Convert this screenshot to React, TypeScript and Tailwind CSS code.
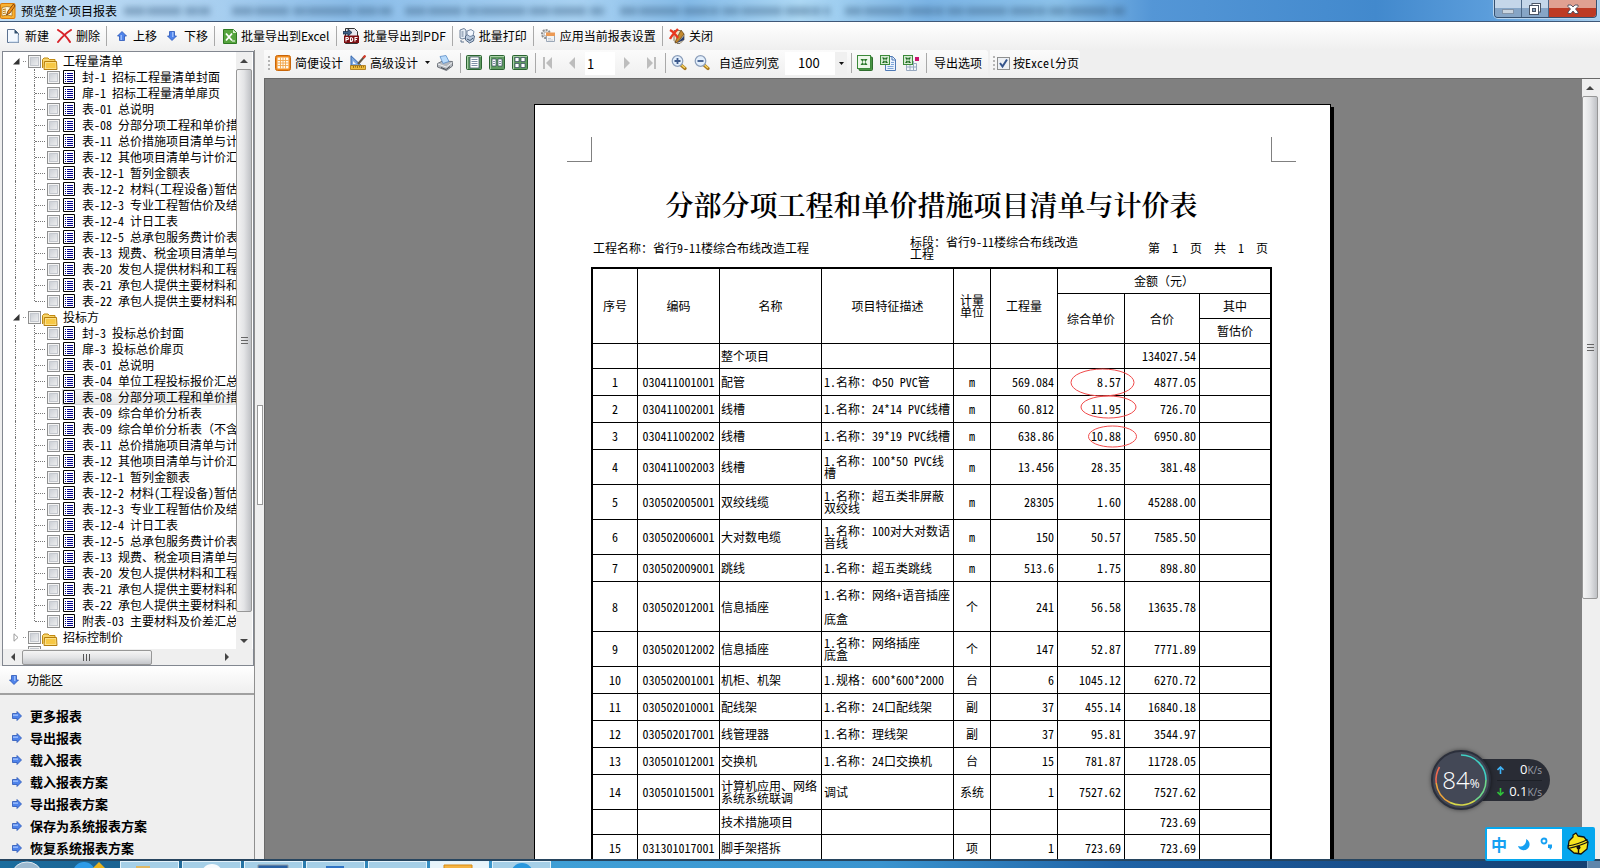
import type { ReactNode } from "react";
import clsx from "clsx";

const REPORTS_TENDER = [
  "封-1 招标工程量清单封面",
  "扉-1 招标工程量清单扉页",
  "表-01 总说明",
  "表-08 分部分项工程和单价措",
  "表-11 总价措施项目清单与计",
  "表-12 其他项目清单与计价汇",
  "表-12-1 暂列金额表",
  "表-12-2 材料(工程设备)暂估",
  "表-12-3 专业工程暂估价及结",
  "表-12-4 计日工表",
  "表-12-5 总承包服务费计价表",
  "表-13 规费、税金项目清单与",
  "表-20 发包人提供材料和工程",
  "表-21 承包人提供主要材料和",
  "表-22 承包人提供主要材料和",
];

const REPORTS_BID = [
  "封-3 投标总价封面",
  "扉-3 投标总价扉页",
  "表-01 总说明",
  "表-04 单位工程投标报价汇总",
  "表-08 分部分项工程和单价措",
  "表-09 综合单价分析表",
  "表-09 综合单价分析表（不含",
  "表-11 总价措施项目清单与计",
  "表-12 其他项目清单与计价汇",
  "表-12-1 暂列金额表",
  "表-12-2 材料(工程设备)暂估",
  "表-12-3 专业工程暂估价及结",
  "表-12-4 计日工表",
  "表-12-5 总承包服务费计价表",
  "表-13 规费、税金项目清单与",
  "表-20 发包人提供材料和工程",
  "表-21 承包人提供主要材料和",
  "表-22 承包人提供主要材料和",
  "附表-03 主要材料及价差汇总",
];

const ACTIONS = [
  "更多报表",
  "导出报表",
  "载入报表",
  "载入报表方案",
  "导出报表方案",
  "保存为系统报表方案",
  "恢复系统报表方案",
];

interface Row {
  no?: string;
  code?: string;
  name: string;
  feature?: string;
  unit?: string;
  qty?: string;
  price?: string;
  total: string;
  height: string;
}

const ROWS: Row[] = [
  { name: "整个项目", total: "134027.54", height: "h-[25px]" },
  { no: "1", code: "030411001001", name: "配管", feature: "1.名称：Φ50 PVC管", unit: "m", qty: "569.084", price: "8.57", total: "4877.05", height: "h-[27px]" },
  { no: "2", code: "030411002001", name: "线槽", feature: "1.名称：24*14 PVC线槽", unit: "m", qty: "60.812", price: "11.95", total: "726.70", height: "h-[27px]" },
  { no: "3", code: "030411002002", name: "线槽", feature: "1.名称：39*19 PVC线槽", unit: "m", qty: "638.86", price: "10.88", total: "6950.80", height: "h-[27px]" },
  { no: "4", code: "030411002003", name: "线槽", feature: "1.名称：100*50 PVC线\n槽", unit: "m", qty: "13.456", price: "28.35", total: "381.48", height: "h-[35px]" },
  { no: "5", code: "030502005001", name: "双绞线缆", feature: "1.名称：超五类非屏蔽\n双绞线", unit: "m", qty: "28305", price: "1.60", total: "45288.00", height: "h-[35px]" },
  { no: "6", code: "030502006001", name: "大对数电缆", feature: "1.名称：100对大对数语\n音线", unit: "m", qty: "150", price: "50.57", total: "7585.50", height: "h-[35px]" },
  { no: "7", code: "030502009001", name: "跳线", feature: "1.名称：超五类跳线", unit: "m", qty: "513.6", price: "1.75", total: "898.80", height: "h-[27px]" },
  { no: "8", code: "030502012001", name: "信息插座", feature: "1.名称：网络+语音插座\n\n底盒", unit: "个", qty: "241", price: "56.58", total: "13635.78", height: "h-[50px]" },
  { no: "9", code: "030502012002", name: "信息插座", feature: "1.名称：网络插座\n底盒", unit: "个", qty: "147", price: "52.87", total: "7771.89", height: "h-[35px]" },
  { no: "10", code: "030502001001", name: "机柜、机架", feature: "1.规格：600*600*2000", unit: "台", qty: "6", price: "1045.12", total: "6270.72", height: "h-[27px]" },
  { no: "11", code: "030502010001", name: "配线架", feature: "1.名称：24口配线架", unit: "副", qty: "37", price: "455.14", total: "16840.18", height: "h-[27px]" },
  { no: "12", code: "030502017001", name: "线管理器", feature: "1.名称：理线架", unit: "副", qty: "37", price: "95.81", total: "3544.97", height: "h-[27px]" },
  { no: "13", code: "030501012001", name: "交换机", feature: "1.名称：24口交换机", unit: "台", qty: "15", price: "781.87", total: "11728.05", height: "h-[27px]" },
  { no: "14", code: "030501015001", name: "计算机应用、网络\n系统系统联调", feature: "调试", unit: "系统", qty: "1", price: "7527.62", total: "7527.62", height: "h-[35px]" },
  { name: "技术措施项目", total: "723.69", height: "h-[25px]" },
  { no: "15", code: "031301017001", name: "脚手架搭拆", unit: "项", qty: "1", price: "723.69", total: "723.69", height: "h-[27px]" },
];

/* ---------- icons ---------- */

function Svg({ w = 16, h = 16, children }: { w?: number; h?: number; children: ReactNode }) {
  return (
    <svg width={w} height={h} viewBox={`0 0 ${w} ${h}`} className="block shrink-0" aria-hidden="true">
      {children}
    </svg>
  );
}

function AppIcon() {
  return (
    <Svg>
      <rect x="0" y="0" width="15.500" height="16" rx="2" fill="#d97a08" />
      <rect x="1" y="1" width="13.500" height="14" rx="1" fill="#f9b233" />
      <path d="M2 4.500l5-1 5 1V13l-5-1-5 1z" fill="#fff6d8" stroke="#8a5208" strokeWidth=".6" />
      <path d="M3 6.500l3-.5M3 8.500l3-.5M3 10.500l3-.5" stroke="#b9770d" />
      <path d="M13.500 1L8 8l-1.500 4L10 10l5-7z" fill="#f2921c" stroke="#6b3504" strokeWidth=".8" />
    </Svg>
  );
}

function NewIcon() {
  return (
    <Svg w={12} h={14}>
      <path d="M.5.5h7l4 4v9H.5z" fill="#f4f9ff" stroke="#5c7291" />
      <path d="M2 13h9V6" fill="none" stroke="#b9cfe8" />
      <path d="M7.500.5v4h4z" fill="#31506f" />
    </Svg>
  );
}

function DeleteIcon() {
  return (
    <Svg w={15} h={14}>
      <path d="M1 1c5 3 9 7 12 12M14 1C9 4 5 8 1 13" fill="none" stroke="#d8232a" strokeWidth="2" strokeLinecap="round" />
    </Svg>
  );
}

function Arrow({ turn }: { turn: string }) {
  return (
    <svg width="10" height="10" viewBox="0 0 10 10" className={clsx("block shrink-0", turn)} aria-hidden="true">
      <path d="M5 .5L9.500 5H7.500v4.500h-5V5H.5z" fill="#4f83ea" stroke="#2a55b8" strokeWidth=".8" />
      <path d="M4.200 4v5" stroke="#a9c8ff" strokeWidth="1.200" />
    </svg>
  );
}

function ExcelIcon() {
  return (
    <Svg w={14} h={15}>
      <path d="M.5.5h10l3 3v11H.5z" fill="#56a43e" stroke="#2e7a22" />
      <path d="M10 .5v3.500h3.500z" fill="#d8f0cc" />
      <path d="M3 4.500l6 7M9 4.500l-6 7" stroke="#fff" strokeWidth="1.800" />
      <path d="M9 12h3" stroke="#fff" />
    </Svg>
  );
}

function PdfIcon() {
  return (
    <Svg>
      <path d="M2.500.5h9l3 3v12h-12z" fill="#e9e9ee" stroke="#333" />
      <rect x="1" y="7.500" width="15" height="7.500" fill="#7d0f12" />
      <path d="M3 13.500V9.500h1.500q1 0 1 1t-1 1H3M7.500 9.500v4q2.200 0 2.200-2t-2.200-2M12 13.500V9.500h2.500M12 11.500h2" fill="none" stroke="#fff" strokeWidth="1.100" />
      <path d="M0 3.500h5V1L9 4.500 5 8V6H0z" fill="#3c5f87" stroke="#13263d" strokeWidth=".7" />
    </Svg>
  );
}

function BatchPrintIcon() {
  return (
    <Svg>
      <path d="M1 2l4-1.500 2 1.500v8l-4 1-2-1z" fill="#e5edf6" stroke="#60748e" strokeWidth=".9" />
      <path d="M2.500 4h2M2.500 6h2M2.500 8h2M2 12v2h3" fill="none" stroke="#60748e" />
      <path d="M6.500 8l4-3 5 3-1 5-4 2-4-3z" fill="#b9c9dd" stroke="#4c617e" strokeWidth=".9" />
      <path d="M8 3l4-1.500 3 2-1 4-3 1-3-2z" fill="#f4f8ff" stroke="#5b7191" strokeWidth=".8" />
      <path d="M8 11l3 1.500L14 10" fill="none" stroke="#405672" />
    </Svg>
  );
}

function ApplyIcon() {
  return (
    <Svg>
      <circle cx="6" cy="6" r="4" fill="#e6e6e6" stroke="#8f8f8f" strokeWidth="2" strokeDasharray="2 1" />
      <circle cx="6" cy="6" r="2" fill="#fff" stroke="#999" strokeWidth=".7" />
      <path d="M6.500 5.500h8v8h-8z" fill="#f3f3f3" stroke="#9aa7b7" />
      <path d="M6 4.500h9V8H6z" fill="#ec9a55" />
      <path d="M8 10.500h3M8 12h5" stroke="#c4ccd6" />
    </Svg>
  );
}

function CloseReportIcon() {
  return (
    <Svg>
      <path d="M5 2.500h6l4 4v5l-4 4H8l-3-3z" fill="#f2e7c9" stroke="#6c5b45" strokeWidth=".8" />
      <path d="M12 2l3 4-6 8-3 1 1-3z" fill="#c58a2e" stroke="#5c3d16" strokeWidth=".7" />
      <path d="M8 15l7-3v-4z" fill="#2b3f6d" />
      <path d="M1 2c4 2 6 5 8 8M9 1C6 4 3 7 1 11" fill="none" stroke="#e8371f" strokeWidth="2.400" />
    </Svg>
  );
}

function GridIcon() {
  return (
    <Svg>
      <rect x=".5" y=".5" width="15" height="15" rx="2" fill="#f08a1d" stroke="#c8660a" />
      <rect x="2.500" y="2.500" width="11" height="11" fill="#fffaf0" />
      <path d="M2.500 5.500h11M2.500 8h11M2.500 10.500h11M5.500 2.500v11M8 2.500v11M10.500 2.500v11" stroke="#f0a54a" strokeWidth=".9" />
    </Svg>
  );
}

function AdvancedIcon() {
  return (
    <Svg>
      <path d="M1 .8v10h10.500z" fill="#7fa9e0" stroke="#3566ac" />
      <path d="M3 6v3h3z" fill="#f5f8fd" />
      <path d="M.5 10.500h15v4H.5z" fill="#f0bc3a" stroke="#a4700c" strokeWidth=".8" />
      <path d="M3.500 11v2M5.500 11v1.500M7.500 11v2M9.500 11v1.500M11.500 11v2M13.500 11v1.500" stroke="#7a520a" strokeWidth=".7" />
      <path d="M15 1L8 9" stroke="#5d5648" strokeWidth="2" />
      <path d="M15.500.5L13 3" stroke="#d83c2a" strokeWidth="2" />
    </Svg>
  );
}

function PrinterIcon() {
  return (
    <Svg>
      <path d="M.5 8.500l5-2.500 10 .5v4.500l-6 4.500-9-3.500z" fill="#b4b8be" stroke="#5b6068" strokeWidth=".8" />
      <path d="M3 1.500L9 .5l3 6-6 2z" fill="#b9dbfb" stroke="#5a8dc6" strokeWidth=".8" />
      <path d="M.8 9l8.500 3 6-4.500" fill="none" stroke="#eef0f3" />
      <path d="M4 12.500l5 2 4-3" fill="none" stroke="#4b4f56" />
    </Svg>
  );
}

function PagesIcon({ kind }: { kind: "one" | "two" | "four" }) {
  return (
    <Svg>
      <rect x=".5" y=".5" width="15" height="14" rx="1" fill="#5f9b60" stroke="#2c6433" />
      <path d="M1.500 14V1.500H15" fill="none" stroke="#a8cfa6" />
      {kind === "one" && (
        <>
          <rect x="4" y="2" width="9" height="11" fill="#fff" stroke="#31455c" strokeWidth=".7" />
          <path d="M5.500 4.500h6M5.500 6.500h6M5.500 8.500h6M5.500 10.500h6" stroke="#7f90a8" />
        </>
      )}
      {kind === "two" && (
        <>
          <path d="M3 4h4v7H3zM9 4h4v7H9z" fill="#fff" stroke="#31455c" strokeWidth=".7" />
          <path d="M4 6.500h2M4 8.500h2M10 6.500h2M10 8.500h2" stroke="#7f90a8" />
        </>
      )}
      {kind === "four" && (
        <path d="M3 2.500h4v4H3zM9 2.500h4v4H9zM3 8.500h4v4H3zM9 8.500h4v4H9z" fill="#fff" stroke="#31455c" strokeWidth=".7" />
      )}
    </Svg>
  );
}

function MagnifierIcon({ plus }: { plus?: boolean }) {
  return (
    <Svg>
      <path d="M10 10l4 3.500" stroke="#a9771c" strokeWidth="3.200" strokeLinecap="round" />
      <path d="M10.500 10l3.500 3" stroke="#f7d661" strokeWidth="1.400" />
      <circle cx="6.500" cy="6" r="5.300" fill="#e3effc" stroke="#8a9db9" strokeWidth="1.200" />
      <path d={plus ? "M3.500 6h6M6.500 3v6" : "M3.500 6h6"} stroke="#3d5a8c" strokeWidth="1.800" />
    </Svg>
  );
}

function SheetIcon() {
  return (
    <Svg>
      <rect x="2" y="2" width="13.500" height="13.500" rx="1" fill="#4c9446" stroke="#2f6e2e" />
      <rect x=".5" y=".5" width="13" height="13" fill="#eef8eb" stroke="#3c8a3a" />
      <path d="M3.500 4h3l4 6h-3zM10.500 4h-3l-4 6h3z" fill="#2d7a2d" />
    </Svg>
  );
}

function SheetCopyIcon() {
  return (
    <Svg>
      <path d="M5.500 1.500h7l3 3v11h-10z" fill="#eaf2fd" stroke="#4f79b5" />
      <path d="M12 1.500v3.500h3.500" fill="none" stroke="#4f79b5" />
      <path d="M7.500 11.500h6M7.500 13.500h6M11 9.500h3M11 7.500h3" stroke="#7ea4d8" />
      <rect x=".5" y=".5" width="9" height="9" fill="#d5ecd1" stroke="#3c8a3a" />
      <path d="M2 2.500h2.200L8 8H5.800zM8 2.500H5.800L2 8h2.200z" fill="#1f6a22" />
    </Svg>
  );
}

function SheetGridIcon() {
  return (
    <Svg>
      <path d="M3.500 8.500h10v7h-10zM3.500 12h10M7 8v8M10.500 6v10" fill="#f2f5fa" stroke="#97a8bf" />
      <rect x=".5" y=".5" width="9" height="9" fill="#d5ecd1" stroke="#3c8a3a" />
      <path d="M2 2.500h2.200L8 8H5.800zM8 2.500H5.800L2 8h2.200z" fill="#1f6a22" />
      <rect x="12" y="2" width="4" height="4" fill="#c9146c" />
    </Svg>
  );
}

function NavIcon({ d }: { d: string }) {
  return (
    <Svg w={10} h={12}>
      <path d={d} fill="#bdbdbd" />
    </Svg>
  );
}

function FolderIcon() {
  return (
    <Svg w={16} h={13}>
      <path d="M.5 11V2.500L2 1h4l1.500 1.500H13V5" fill="#f9d56a" stroke="#c08a12" />
      <path d="M2.500 4.500h12l.5 8H2z" fill="#fbdf86" stroke="#b57d0c" />
      <path d="M4 6h9.500v5H4z" fill="#f7c845" />
    </Svg>
  );
}

function ReportIcon() {
  return (
    <Svg w={12} h={14}>
      <path d="M.5.5h11v13H.5z" fill="#fff" stroke="#000" />
      <path d="M2 3.500h1M4 3.500h6M2 5.500h1M4 5.500h6M2 7.500h1M4 7.500h6M2 9.500h1M4 9.500h6M2 11.500h1M4 11.500h6" stroke="#00008b" />
    </Svg>
  );
}

/* ---------- small parts ---------- */

function Sep() {
  return <span className="h-5 w-px shrink-0 bg-[#a9a9a9]" />;
}

function Grip() {
  return <span className="h-[15px] w-[2px] shrink-0 bg-[repeating-linear-gradient(#b5b5b5_0_2px,transparent_2px_4px)]" />;
}

function ToolButton({ icon, label, gap = "gap-1" }: { icon: ReactNode; label?: string; gap?: string }) {
  return (
    <button type="button" className={clsx("flex shrink-0 items-center whitespace-nowrap", gap)}>
      {icon}
      {label}
    </button>
  );
}

function Check({ label }: { label: string }) {
  return (
    <input
      type="checkbox"
      aria-label={label}
      className="size-[13px] shrink-0 appearance-none border border-[#8e8f8f] bg-[linear-gradient(135deg,#c3c8cf,#f6f6f6)] shadow-[inset_0_0_0_1px_#f4f4f4,inset_0_0_0_2px_#c4c8ce]"
    />
  );
}

function TreeRoot({ label, open }: { label: string; open?: boolean }) {
  return (
    <div className="flex h-4 items-center whitespace-nowrap pl-[9px]">
      <Svg w={9} h={9}>
        {open ? <path d="M7.500 1v6.500H1z" fill="#333" /> : <path d="M2 .8L6 4.500 2 8.200z" fill="#fff" stroke="#999" />}
      </Svg>
      <span className="ml-[2px] w-[3px] border-t border-dotted border-[#888]" />
      <span className="ml-[2px] flex">
        <Check label={label} />
      </span>
      <span className="mt-1 ml-px">
        <FolderIcon />
      </span>
      <span className="ml-[5px]">{label}</span>
    </div>
  );
}

function TreeItem({ label, last, active }: { label: string; last: boolean; active?: boolean }) {
  return (
    <div className="flex h-4 items-center whitespace-nowrap pl-[12px]">
      <span className="h-4 w-px shrink-0 border-l border-dotted border-[#777]" />
      <span className={clsx("ml-[18px] w-px shrink-0 self-start border-l border-dotted border-[#777]", last ? "h-2" : "h-4")} />
      <span className="mr-[2px] w-[10px] shrink-0 border-t border-dotted border-[#777]" />
      <Check label={label} />
      <span
        className={clsx(
          "ml-[2px] flex h-4 min-w-0 flex-1 items-center gap-[7px] pl-px",
          active && "bg-linear-to-b from-[#fafafa] to-[#e6e6e6] shadow-[inset_0_0_0_1px_#dadada]",
        )}
      >
        <ReportIcon />
        {label}
      </span>
    </div>
  );
}

function ScrollArrow({ d, label, size = "h-[17px] w-full" }: { d: string; label: string; size?: string }) {
  return (
    <button type="button" aria-label={label} className={clsx("flex shrink-0 items-center justify-center", size)}>
      <Svg w={8} h={8}>
        <path d={d} fill="#444" />
      </Svg>
    </button>
  );
}

function VerticalBar({ thumb }: { thumb: string }) {
  return (
    <div className="flex w-4 shrink-0 flex-col bg-[#efefef]">
      <ScrollArrow d="M4 2l4 4H0z" label="向上滚动" />
      <div
        className={clsx(
          "flex items-center justify-center rounded-[2px] border border-[#979797] bg-linear-to-r from-[#f5f5f5] via-[#e3e4e6] to-[#bfc1c5]",
          thumb,
        )}
      >
        <span className="h-2 w-[7px] bg-[repeating-linear-gradient(#666_0_1px,transparent_1px_3px)]" />
      </div>
      <div className="flex-1" />
      <ScrollArrow d="M0 2h8L4 6z" label="向下滚动" />
    </div>
  );
}

/* ---------- regions ---------- */

function TitleBar() {
  return (
    <header className="relative flex h-[22px] shrink-0 items-center overflow-hidden border-b border-[#3f5878] bg-[linear-gradient(90deg,#c3def4_0,#add2f1_12%,#8bbde9_22%,#a9d2f2_36%,#85bbe8_43%,#aed9f5_50%,#7bb4e5_58%,#8cc2ea_66%,#5496d6_72%,#4289cd_86%,#5b9ddb_93%,#a8cfee_100%)]">
      <AppIcon />
      <h1 className="relative z-10 ml-[5px] text-xs text-black">预览整个项目报表</h1>
      {/* glass haze behind the caption */}
      <svg className="absolute top-0 left-[120px] h-[21px] w-[1010px]" aria-hidden="true">
        <g className="blur-[3px]" fill="none" strokeWidth="8" stroke="#2f5478">
          <path d="M4 11h86M112 11h160M285 11h200" strokeDasharray="21 2 34 4 13 1 46 3" opacity=".4" />
          <path d="M500 11h210M725 11h280" strokeDasharray="17 2 41 3 26 1 9 3" opacity=".4" />
        </g>
      </svg>
      <div className="absolute top-0 right-[3px] flex h-[18px] overflow-hidden rounded-b-[4px] border border-t-0 border-[#36506f] shadow-[0_0_0_1px_#b9d5ee]">
        <button type="button" aria-label="最小化" className="flex w-[27px] items-center justify-center border-r border-[#4b6787] bg-linear-to-b from-[#c4d6e9] from-50% to-[#86a5c6] to-50%">
          <Svg w={12} h={14}>
            <rect x=".5" y="7.500" width="11" height="4" fill="#c9d4df" stroke="#8394a8" />
          </Svg>
        </button>
        <button type="button" aria-label="还原" className="flex w-[27px] items-center justify-center border-r border-[#4b6787] bg-linear-to-b from-[#c4d6e9] from-50% to-[#86a5c6] to-50%">
          <Svg w={12} h={12}>
            <rect x="3" y=".5" width="8.500" height="8.500" fill="#fff" stroke="#4b5565" />
            <rect x=".5" y="2.500" width="9" height="9" fill="#fff" stroke="#4b5565" />
            <rect x="3.500" y="5.500" width="3" height="3" fill="#8fa9c4" stroke="#4b5565" />
          </Svg>
        </button>
        <button type="button" aria-label="关闭窗口" className="flex w-[47px] items-center justify-center bg-linear-to-b from-[#e0a091] from-50% to-[#bd3a24] to-50%">
          <Svg w={12} h={10}>
            <path d="M1 1h3l2 2 2-2h3v1.500L8.500 5 11 8v1.500H8L6 7 4 9.500H1V8l2.500-3L1 2.500z" fill="#fff" stroke="#4b4b5c" strokeWidth=".9" />
          </Svg>
        </button>
      </div>
    </header>
  );
}

function MainToolbar() {
  return (
    <div className="flex h-7 shrink-0 items-center bg-linear-to-b from-white to-[#efefef] pl-[7px]">
      <ToolButton icon={<NewIcon />} label="新建" gap="gap-[6px]" />
      <span className="w-2" />
      <ToolButton icon={<DeleteIcon />} label="删除" />
      <span className="w-[6px]" />
      <Sep />
      <span className="w-[10px]" />
      <ToolButton icon={<Arrow turn="" />} label="上移" gap="gap-[6px]" />
      <span className="w-[10px]" />
      <ToolButton icon={<Arrow turn="rotate-180" />} label="下移" gap="gap-[7px]" />
      <span className="w-[6px]" />
      <Sep />
      <span className="w-2" />
      <ToolButton icon={<ExcelIcon />} label="批量导出到Excel" />
      <span className="w-[7px]" />
      <Sep />
      <span className="w-[6px]" />
      <ToolButton icon={<PdfIcon />} label="批量导出到PDF" />
      <span className="w-[6px]" />
      <Sep />
      <span className="w-[6px]" />
      <ToolButton icon={<BatchPrintIcon />} label="批量打印" />
      <span className="w-[6px]" />
      <Sep />
      <span className="w-[6px]" />
      <ToolButton icon={<ApplyIcon />} label="应用当前报表设置" />
      <span className="w-[6px]" />
      <Sep />
      <span className="w-[6px]" />
      <ToolButton icon={<CloseReportIcon />} label="关闭" />
    </div>
  );
}

function ReportTree() {
  return (
    <div className="ml-[2px] flex h-[615px] shrink-0 flex-col border border-[#828790] bg-white">
      <div className="flex min-h-0 flex-1">
        <div className="min-w-0 flex-1 overflow-hidden pt-px font-['Noto_Sans_Mono_CJK_SC','Noto_Sans_CJK_SC',sans-serif] text-xs leading-4 text-black">
          <TreeRoot label="工程量清单" open />
          {REPORTS_TENDER.map((label, i) => (
            <TreeItem key={label} label={label} last={i === REPORTS_TENDER.length - 1} />
          ))}
          <TreeRoot label="投标方" open />
          {REPORTS_BID.map((label, i) => (
            <TreeItem key={label} label={label} last={i === REPORTS_BID.length - 1} active={i === 4} />
          ))}
          <TreeRoot label="招标控制价" />
          <div className="flex h-4 pl-[25px] pt-px">
            <Check label="其他" />
          </div>
        </div>
        <div className="mr-px flex">
          <VerticalBar thumb="h-[543px]" />
        </div>
      </div>
      <div className="flex h-4 shrink-0 items-center bg-[#efefef] pr-[18px]">
        <ScrollArrow d="M6 0v8L2 4z" label="向左滚动" size="h-4 w-[19px]" />
        <div className="flex h-[15px] w-[130px] items-center justify-center rounded-[2px] border border-[#979797] bg-linear-to-b from-[#f5f5f5] via-[#e3e4e6] to-[#c4c6ca]">
          <span className="h-[7px] w-2 bg-[repeating-linear-gradient(90deg,#555_0_1px,transparent_1px_3px)]" />
        </div>
        <div className="flex-1" />
        <ScrollArrow d="M2 0v8l4-4z" label="向右滚动" size="h-4 w-[17px]" />
      </div>
    </div>
  );
}

function Sidebar() {
  return (
    <aside className="flex w-[255px] shrink-0 flex-col overflow-hidden border-r border-[#8f8f8f] bg-[#efefef] pt-px">
      <ReportTree />
      <h2 className="flex h-[29px] shrink-0 items-center gap-2 border-b-2 border-[#a0a0a0] bg-linear-to-b from-white to-[#efefef] pl-[9px] text-xs text-black">
        <Arrow turn="rotate-180" />
        功能区
      </h2>
      <ul className="min-h-0 flex-1 overflow-hidden pt-[10px]">
        {ACTIONS.map((label) => (
          <li key={label} className="h-[22px]">
            <button type="button" className="flex h-[22px] items-center gap-2 pl-3 text-[13px] font-bold text-black">
              <Arrow turn="rotate-90" />
              {label}
            </button>
          </li>
        ))}
      </ul>
    </aside>
  );
}

function PreviewToolbar() {
  return (
    <div className="flex h-[29px] shrink-0 border-b border-[#696969] bg-[#efefef] text-xs">
      <div className="flex items-center rounded-r-[3px] bg-linear-to-b from-[#fbfbfb] to-[#efefef] pr-[6px] pb-[2px] pl-1">
        <Grip />
        <span className="w-[5px]" />
        <ToolButton icon={<GridIcon />} label="简便设计" />
        <span className="w-[7px]" />
        <ToolButton icon={<AdvancedIcon />} label="高级设计" />
        <span className="w-[7px]" />
        <button type="button" aria-label="更多设计">
          <Svg w={5} h={4}>
            <path d="M0 0h5L2.500 3z" fill="#111" />
          </Svg>
        </button>
        <span className="w-[7px]" />
        <ToolButton icon={<PrinterIcon />} />
        <span className="w-[7px]" />
        <Sep />
        <span className="w-[5px]" />
        <div className="flex gap-[7px]">
          <ToolButton icon={<PagesIcon kind="one" />} />
          <ToolButton icon={<PagesIcon kind="two" />} />
          <ToolButton icon={<PagesIcon kind="four" />} />
        </div>
        <span className="w-[7px]" />
        <Sep />
        <span className="w-[7px]" />
        <ToolButton icon={<NavIcon d="M0 0h2v12H0zM9 0v12L3 6z" />} />
        <span className="w-4" />
        <ToolButton icon={<NavIcon d="M6 0v12L0 6z" />} />
        <span className="w-[6px]" />
        <input
          aria-label="页码"
          defaultValue="1"
          className="h-[23px] w-[30px] bg-white pl-[2px] text-[13px] text-black"
        />
        <span className="w-[9px]" />
        <ToolButton icon={<NavIcon d="M0 0v12l6-6z" />} />
        <span className="w-[13px]" />
        <ToolButton icon={<NavIcon d="M0 0v12l6-6zM7 0h2v12H7z" />} />
        <span className="w-2" />
        <Sep />
        <span className="w-[5px]" />
        <div className="flex gap-[7px]">
          <ToolButton icon={<MagnifierIcon plus />} />
          <ToolButton icon={<MagnifierIcon />} />
        </div>
        <span className="w-[9px]" />
        <button type="button" className="whitespace-nowrap">自适应列宽</button>
        <span className="w-[6px]" />
        <div className="relative flex">
          <select
            aria-label="缩放比例"
            defaultValue="100"
            className="h-[23px] w-[62px] appearance-none border-r-[12px] border-[#f0f0f0] bg-white pl-[13px] text-[13px] text-black"
          >
            <option>100</option>
            <option>75</option>
          </select>
          <span className="pointer-events-none absolute top-[10px] right-[3px]">
            <Svg w={5} h={4}>
              <path d="M0 0h5L2.500 3z" fill="#111" />
            </Svg>
          </span>
        </div>
        <span className="w-1" />
        <Sep />
        <span className="w-[5px]" />
        <div className="flex gap-[7px]">
          <ToolButton icon={<SheetIcon />} />
          <ToolButton icon={<SheetCopyIcon />} />
          <ToolButton icon={<SheetGridIcon />} />
        </div>
        <span className="w-[7px]" />
        <Sep />
        <span className="w-[7px]" />
        <button type="button" className="whitespace-nowrap">导出选项</button>
      </div>
      <div className="ml-[2px] flex items-center rounded-r-[3px] bg-linear-to-b from-[#fbfbfb] to-[#efefef] pr-px pb-[2px] pl-[3px]">
        <Grip />
        <label className="ml-[2px] flex items-center gap-[3px] whitespace-nowrap font-['Noto_Sans_Mono_CJK_SC','Noto_Sans_CJK_SC',sans-serif] text-black">
          <span className="relative flex">
            <input
              type="checkbox"
              defaultChecked
              className="peer size-[13px] appearance-none border border-[#8e8f8f] bg-[#eef1f5]"
            />
            <svg width="13" height="13" viewBox="0 0 13 13" className="pointer-events-none absolute inset-0 hidden peer-checked:block" aria-hidden="true">
              <path d="M3 6l2.500 3.500L10 2.500" fill="none" stroke="#34548c" strokeWidth="2" />
            </svg>
          </span>
          按Excel分页
        </label>
      </div>
    </div>
  );
}

function Th({ children, edge, ...span }: { children: ReactNode; rowSpan?: number; colSpan?: number; edge?: boolean }) {
  return (
    <th {...span} className={clsx("border-b border-black p-0 text-center font-normal", !edge && "border-r")}>
      {children}
    </th>
  );
}

function BillTable() {
  const cell = "border-r border-b border-black p-0";
  return (
    <div className="relative mt-[7px]">
      <table className="w-full table-fixed border-separate border-spacing-0 border-2 border-black text-xs leading-3">
        <colgroup>
          <col className="w-[45px]" />
          <col className="w-[82px]" />
          <col className="w-[102px]" />
          <col className="w-[132px]" />
          <col className="w-[37px]" />
          <col className="w-[67px]" />
          <col className="w-[67px]" />
          <col className="w-[75px]" />
          <col />
        </colgroup>
        <thead>
          <tr className="h-[25px]">
            <Th rowSpan={3}>序号</Th>
            <Th rowSpan={3}>编码</Th>
            <Th rowSpan={3}>名称</Th>
            <Th rowSpan={3}>项目特征描述</Th>
            <Th rowSpan={3}>
              计量
              <br />
              单位
            </Th>
            <Th rowSpan={3}>工程量</Th>
            <Th colSpan={3} edge>
              金额（元）
            </Th>
          </tr>
          <tr className="h-[25px]">
            <Th rowSpan={2}>综合单价</Th>
            <Th rowSpan={2}>合价</Th>
            <Th edge>其中</Th>
          </tr>
          <tr className="h-[25px]">
            <Th edge>暂估价</Th>
          </tr>
        </thead>
        <tbody>
          {ROWS.map((r, i) => (
            <tr key={i} className={r.height}>
              <td className={clsx(cell, "text-center")}>{r.no}</td>
              <td className={clsx(cell, "text-center")}>{r.code}</td>
              <td className={clsx(cell, "whitespace-pre pl-px")}>{r.name}</td>
              <td className={clsx(cell, "whitespace-pre pl-[2px]")}>{r.feature}</td>
              <td className={clsx(cell, "text-center")}>{r.unit}</td>
              <td className={clsx(cell, "pr-[3px] text-right")}>{r.qty}</td>
              <td className={clsx(cell, "pr-[3px] text-right")}>{r.price}</td>
              <td className={clsx(cell, "pr-[3px] text-right")}>{r.total}</td>
              <td className="border-b border-black p-0" />
            </tr>
          ))}
        </tbody>
      </table>
      {/* hand-drawn marks round the unit prices */}
      <svg className="pointer-events-none absolute inset-0 size-full" fill="none" stroke="#f04a4a" aria-hidden="true">
        <ellipse cx="511.500" cy="115.500" rx="31.500" ry="13.500" />
        <ellipse cx="517.500" cy="140" rx="27.500" ry="11" />
        <ellipse cx="521.500" cy="169.500" rx="24" ry="10.500" />
      </svg>
    </div>
  );
}

function ReportPage() {
  return (
    <div className="relative w-[797px] shrink-0">
      <div className="absolute top-[3px] -right-[3px] h-full w-1 bg-black" />
      <article className="relative border border-black bg-white font-['Noto_Sans_Mono_CJK_SC','Noto_Sans_CJK_SC',sans-serif] text-xs text-black">
        <div className="flex justify-between pt-8 pr-[34px] pl-8">
          <span className="size-[25px] border-r border-b border-[#808080]" />
          <span className="size-[25px] border-b border-l border-[#808080]" />
        </div>
        <div className="pr-[58px] pb-8 pl-14">
          <h2 className="mt-6 text-center font-['Noto_Serif_CJK_SC','Noto_Sans_CJK_SC',serif] text-[28px] leading-9 font-semibold">
            分部分项工程和单价措施项目清单与计价表
          </h2>
          <div className="mt-[14px] grid grid-cols-[319px_170px_1fr] items-center leading-3">
            <p className="pl-[2px]">工程名称：省行9-11楼综合布线改造工程</p>
            <p>
              标段：省行9-11楼综合布线改造
              <br />
              工程
            </p>
            <p className="pr-1 text-right whitespace-pre">第  1  页  共  1  页</p>
          </div>
          <BillTable />
        </div>
      </article>
    </div>
  );
}

function SpeedWidget() {
  return (
    <div className="absolute top-[750px] right-[50px] flex items-center font-['Open_Sans',sans-serif]">
      <div className="relative z-10 size-[60px] rounded-full border-2 border-[#2b2f3b] bg-[#434856] shadow-[0_0_4px_rgba(0,0,0,.5)]">
        <svg width="56" height="56" viewBox="0 0 56 56" className="absolute inset-0" fill="none" strokeWidth="1.600" aria-hidden="true">
          <path d="M28 3a25 25 0 0 1 25 25" stroke="#3fd0c4" />
          <path d="M53 28a25 25 0 0 1-11 20.700" stroke="#6fd98b" />
          <path d="M42 48.700A25 25 0 0 1 17 50.500" stroke="#d6d84a" />
          <path d="M17 50.500A25 25 0 0 1 3.200 31" stroke="#eea53a" />
          <path d="M3.200 31A25 25 0 0 1 6.500 15" stroke="#f0694f" />
        </svg>
        <p className="relative flex h-full items-center justify-center text-2xl font-light text-white">
          84<span className="mt-2 text-xs font-normal">%</span>
        </p>
      </div>
      <dl className="-ml-4 flex h-[42px] w-[75px] flex-col rounded-r-full bg-[#292c35] pr-2 pl-[22px] text-[13px] leading-5 text-white">
        <div className="flex flex-1 items-center border-b border-[#1d2027]">
          <dt className="mr-auto text-[#3fb2f5]" aria-label="上传">
            <Svg w={7} h={8}>
              <path d="M3.500 8V1M.5 4l3-3 3 3" fill="none" stroke="currentColor" strokeWidth="1.600" />
            </Svg>
          </dt>
          <dd>
            0<span className="text-[10px] text-[#9a9fa9]">K/s</span>
          </dd>
        </div>
        <div className="flex flex-1 items-center">
          <dt className="mr-auto text-[#2fc13a]" aria-label="下载">
            <Svg w={7} h={8}>
              <path d="M3.500 0v7M.5 4l3 3 3-3" fill="none" stroke="currentColor" strokeWidth="1.600" />
            </Svg>
          </dt>
          <dd>
            0.1<span className="text-[10px] text-[#9a9fa9]">K/s</span>
          </dd>
        </div>
      </dl>
    </div>
  );
}

function ImeBar() {
  return (
    <div className="absolute right-[5px] bottom-[7px] z-20 flex h-[34px] w-[110px] rounded-[2px] border-2 border-[#06a7ee] bg-[#06a7ee]">
      <div className="flex w-[75px] items-center justify-between bg-white pr-2 pl-1 text-base font-bold text-[#15a0f2]">
        <button type="button" aria-label="中文输入">中</button>
        <button type="button" aria-label="半角">
          <Svg w={14} h={14}>
            <path d="M9 2a6 6 0 0 1-8 7 6 6 0 0 0 11 1 6 6 0 0 0-3-8z" fill="#15a0f2" />
          </Svg>
        </button>
        <button type="button" aria-label="标点">
          <Svg w={14} h={14}>
            <circle cx="4" cy="4" r="2.500" fill="none" stroke="#15a0f2" strokeWidth="1.800" />
            <path d="M8 7.500h4v3l-2 2.500-.5-2H8z" fill="#15a0f2" />
          </Svg>
        </button>
      </div>
      <button type="button" aria-label="输入法菜单" className="flex flex-1 items-center justify-center">
        <Svg w={24} h={24}>
          <path d="M7 3l3-2 2 3 6 1 4 5-1 7-6 5-7-1-6-5 1-7 4-4z" fill="#f6e51f" stroke="#111" strokeWidth="1.300" strokeLinejoin="round" />
          <path d="M1.500 14C8 13 15 11 21.500 7.500M2 16.500C9 15 16 13 22 10" fill="none" stroke="#111" strokeWidth="1.100" />
          <circle cx="12.500" cy="15.500" r="2" fill="#111" />
          <path d="M12.500 16v6" stroke="#111" strokeWidth="1.400" />
        </Svg>
      </button>
    </div>
  );
}

function Taskbar() {
  return (
    <footer className="flex h-[9px] shrink-0 overflow-hidden border-t-2 border-[#27455f] bg-[linear-gradient(90deg,#1b6d9e_0,#1b6291_8%,#3f9fd6_35%,#3a94cf_55%,#1f62a5_70%,#194f8b_85%,#143f70_100%)]">
      <svg width="560" height="7" className="shrink-0" aria-hidden="true">
        <ellipse cx="27" cy="12" rx="14" ry="11" fill="#9cb9cf" stroke="#dfeaf2" />
        <circle cx="84" cy="12" r="11" fill="#2d9be8" />
        <path d="M93 7l6-6 6 6z" fill="#e8b21c" />
        <g fill="#a5cfe7" stroke="#e4f3fb">
          <rect x="120.500" y=".5" width="58" height="12" />
          <rect x="182.500" y=".5" width="58" height="12" />
          <rect x="244.500" y=".5" width="58" height="12" />
          <rect x="306.500" y=".5" width="58" height="12" />
          <rect x="368.500" y=".5" width="58" height="12" />
          <rect x="430.500" y=".5" width="58" height="12" fill="#e8f4fa" />
          <rect x="492.500" y=".5" width="58" height="12" />
        </g>
        <path d="M136 5h14v3h-14z" fill="#dfb763" />
        <circle cx="212" cy="14" r="11" fill="#f8fbfd" />
        <path d="M258 4h30v4h-30z" fill="#2a62a4" stroke="#8d9aa5" />
        <path d="M326 5h18v3h-18z" fill="#2f73c4" />
        <path d="M444 4h28v4h-28z" fill="#f5b443" stroke="#d98a10" />
        <circle cx="522" cy="13" r="11" fill="#2797de" />
      </svg>
      <span className="ml-auto w-[13px] border-l border-[#7fa3c4] bg-[#5f86ab]" />
    </footer>
  );
}

export default function App() {
  return (
    <div className="relative flex h-screen flex-col overflow-hidden bg-[#efefef] font-['Noto_Sans_CJK_SC',sans-serif] text-xs text-black">
      <TitleBar />
      <MainToolbar />
      <div className="flex min-h-0 flex-1">
        <Sidebar />
        <div className="flex w-[9px] shrink-0 items-center justify-center">
          <span className="h-[100px] w-[6px] border border-[#999] bg-white" />
        </div>
        <main className="flex min-w-0 flex-1 flex-col">
          <PreviewToolbar />
          <div className="flex min-h-0 flex-1 border-l border-[#696969] pr-[2px]">
            <div className="flex min-w-0 flex-1 items-start justify-center overflow-hidden bg-[#808080] pt-[25px] pl-[18px]">
              <ReportPage />
            </div>
            <VerticalBar thumb="h-[503px]" />
          </div>
        </main>
      </div>
      <Taskbar />
      <SpeedWidget />
      <ImeBar />
    </div>
  );
}
